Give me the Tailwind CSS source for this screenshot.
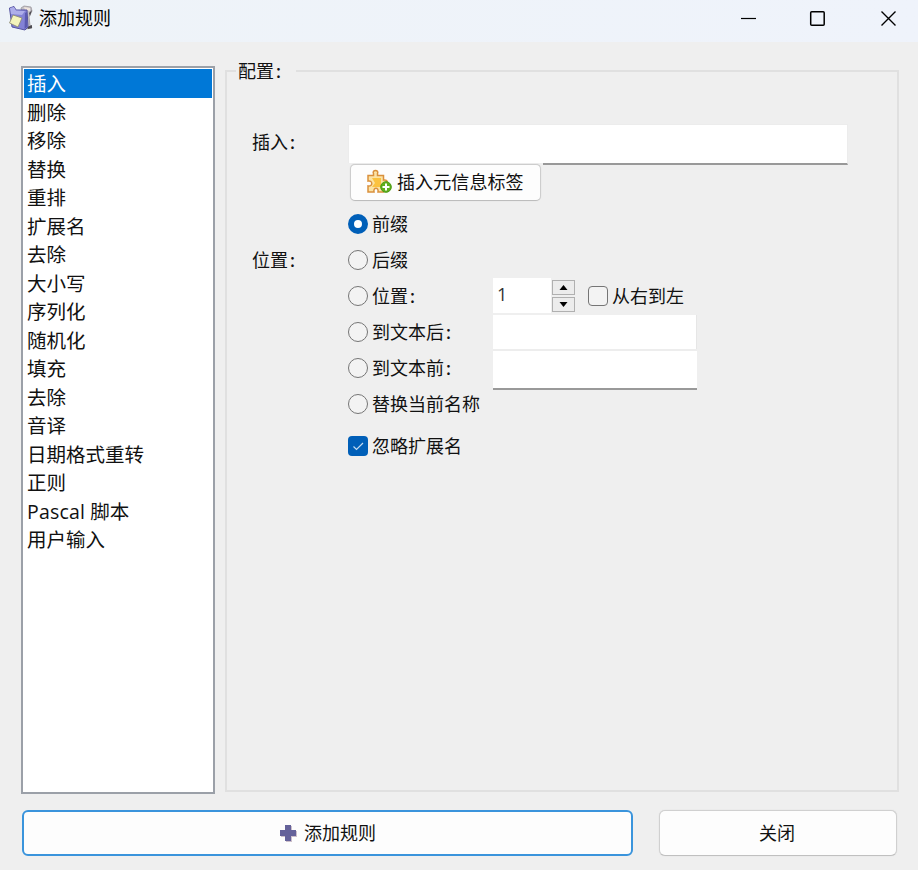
<!DOCTYPE html>
<html lang="zh-CN">
<head>
<meta charset="utf-8">
<title>添加规则</title>
<script src="https://cdn.jsdelivr.net/npm/@tailwindcss/browser@4"></script>
</head>
<body class="w-[918px] h-[870px] overflow-hidden bg-[#efefef] flex flex-col font-['Open_Sans','Noto_Sans_CJK_SC',sans-serif] text-[18px] leading-[36px] text-[#111]">
<header class="h-[42px] shrink-0 flex items-center bg-linear-to-r from-[#eef3f8] to-[#eff3fb] pl-[8px] pb-[6px]">
  <svg class="w-[26px] h-[26px] shrink-0" viewBox="0 0 26 26">
    <path d="M13 3L16 1L23 2L24 6L21 12L22 20L24 23L18 24Z" fill="#c4c1c6" stroke="#9a979c" stroke-width=".8"/>
    <path d="M16 2L22 3L22 6L17 5Z" fill="#efe4dc"/>
    <path d="M21 8L24 5L22 11ZM19 22L24 20V23L20 24Z" fill="#4c4a50"/>
    <path d="M1.500 3L6 1.500L8 5L19 5L20 22L17 25L4 22Z" fill="#8382d6" stroke="#5553a0" stroke-width="1"/>
    <path d="M2 3L6 2L8 5.500L17 6L14 10L3 9Z" fill="#aeaeea"/>
    <path d="M17 8L19 7V22L16.500 24Z" fill="#5b5ab0"/>
    <path d="M5 10L14 13L10 22L1.500 18Z" fill="#f4f4bc" stroke="#8a8970" stroke-width=".8"/>
  </svg>
  <h1 class="ml-[5px] text-black">添加规则</h1>
  <div class="ml-auto flex">
    <svg class="w-[70px] h-[36px]" viewBox="0 0 70 36"><path d="M13 18.500H28" stroke="#000" stroke-width="1.200"/></svg>
    <svg class="w-[70px] h-[36px]" viewBox="0 0 70 36"><rect x="12.700" y="11.700" width="13.500" height="13.500" rx="1" fill="none" stroke="#000" stroke-width="1.500"/></svg>
    <svg class="w-[50px] h-[36px]" viewBox="0 0 50 36"><path d="M13.500 11.500l14 14M27.500 11.500l-14 14" stroke="#000" stroke-width="1.400"/></svg>
  </div>
</header>
<main class="flex h-[752px] shrink-0 pl-[21px] pt-[24px]">
  <ul class="w-[193.5px] h-[728px] shrink-0 border-2 border-[#9ba0a8] bg-white pt-px pl-px pr-px text-[19.5px] leading-[30px] whitespace-nowrap">
    <li class="h-[28.5px] bg-[#0078d7] text-white pl-[3px]">插入</li>
    <li class="h-[28.5px] pl-[3px]">删除</li>
    <li class="h-[28.5px] pl-[3px]">移除</li>
    <li class="h-[28.5px] pl-[3px]">替换</li>
    <li class="h-[28.5px] pl-[3px]">重排</li>
    <li class="h-[28.5px] pl-[3px]">扩展名</li>
    <li class="h-[28.5px] pl-[3px]">去除</li>
    <li class="h-[28.5px] pl-[3px]">大小写</li>
    <li class="h-[28.5px] pl-[3px]">序列化</li>
    <li class="h-[28.5px] pl-[3px]">随机化</li>
    <li class="h-[28.5px] pl-[3px]">填充</li>
    <li class="h-[28.5px] pl-[3px]">去除</li>
    <li class="h-[28.5px] pl-[3px]">音译</li>
    <li class="h-[28.5px] pl-[3px]">日期格式重转</li>
    <li class="h-[28.5px] pl-[3px]">正则</li>
    <li class="h-[28.5px] pl-[3px]"><span class="tracking-[0.2px]">Pascal</span> 脚本</li>
    <li class="h-[28.5px] pl-[3px]">用户输入</li>
  </ul>
  <fieldset class="ml-[10.5px] mt-[-13px] w-[674px] h-[739px] border-2 border-[#e0e0e0] min-w-0">
    <legend class="ml-[9px] pl-[2px] pr-[12px] h-[36px] whitespace-nowrap">配置<span class="ml-[2px] mr-[3px] font-semibold">:</span></legend>
    <div class="flex pl-[25px] pt-[35px] whitespace-nowrap">
      <div class="w-[96px] shrink-0">
        <div class="h-[36px]">插入<span class="ml-[2px] font-semibold">:</span></div>
        <div class="mt-[82px] h-[36px]">位置<span class="ml-[2px] font-semibold">:</span></div>
      </div>
      <div>
        <div class="w-[500px] h-[41px] bg-white border border-[#ececec] border-b-2 border-b-[#999]"></div>
        <div class="mt-[-2px] w-[195px] h-[39px] bg-[#efefef] pl-[2px] pt-[1px]">
          <button class="w-[191px] h-[37px] rounded-[5px] bg-[#fdfdfd] border-[1.5px] border-[#cdcdcd] border-b-[#bdbdbd] shadow-[0_0_1px_#ccc] flex items-center pl-[15px]">
            <svg class="w-[26px] h-[26px] mt-[-1px]" viewBox="0 0 26 26">
              <path d="M2 6.500H7.500V4.500C5.500 0.500 13.500 0.500 11.500 4.500V6.500H17.500V11C22.500 10 22.500 16 17.500 15.500V23H12C13 18 7 18 8 23H2V17C7 18 7 11 2 12Z" fill="#fce3a4" stroke="#d9903c" stroke-width="1.500"/>
              <path d="M6 9H15V18H6L9 14Z" fill="#fbc23f"/>
              <circle cx="20" cy="18" r="5.300" fill="#5fae1c" stroke="#4a9a14"/>
              <path d="M16.500 18h7M20 14.500v7" stroke="#fff" stroke-width="2"/>
            </svg>
            <span class="ml-[5px] mt-[-1px] tracking-[0.1px]">插入元信息标签</span>
          </button>
        </div>
        <div class="flex mt-[4px]">
          <div class="w-[145px] shrink-0">
            <label class="flex items-center h-[36px]"><span class="w-[20px] h-[20px] mr-[4px] rounded-full bg-white border-[6px] border-[#005fb8]"></span>前缀</label>
            <label class="flex items-center h-[36px]"><span class="w-[20px] h-[20px] mr-[4px] rounded-full bg-[#f3f3f3] border-[1.5px] border-[#757575]"></span>后缀</label>
            <label class="flex items-center h-[36px]"><span class="w-[20px] h-[20px] mr-[4px] rounded-full bg-[#f3f3f3] border-[1.5px] border-[#757575]"></span>位置<span class="ml-[2px] font-semibold">:</span></label>
            <label class="flex items-center h-[36px]"><span class="w-[20px] h-[20px] mr-[4px] rounded-full bg-[#f3f3f3] border-[1.5px] border-[#757575]"></span>到文本后<span class="ml-[2px] font-semibold">:</span></label>
            <label class="flex items-center h-[36px]"><span class="w-[20px] h-[20px] mr-[4px] rounded-full bg-[#f3f3f3] border-[1.5px] border-[#757575]"></span>到文本前<span class="ml-[2px] font-semibold">:</span></label>
            <label class="flex items-center h-[36px]"><span class="w-[20px] h-[20px] mr-[4px] rounded-full bg-[#f3f3f3] border-[1.5px] border-[#757575]"></span>替换当前名称</label>
            <label class="flex items-center h-[36px] mt-[6px]"><span class="w-[20px] h-[20px] mr-[4px] rounded-[4px] bg-[#005fb8]"><svg class="w-[20px] h-[20px]" viewBox="0 0 20 20"><path d="M5.500 10.500l3 3L15 7" fill="none" stroke="#c4dcf0" stroke-width="1.200"/></svg></span>忽略扩展名</label>
          </div>
          <div class="pt-[72px]">
            <div class="flex h-[37px]">
              <div class="w-[58px] h-[35px] bg-white pl-[4px] leading-[33px] text-[#333]">1</div>
              <div class="ml-[1px] mt-[2px] flex flex-col gap-[1.5px]">
                <div class="w-[23px] h-[15px] border border-[#b0b0b0] bg-[#ececec] flex items-center justify-center"><svg class="w-[9px] h-[5px]" viewBox="0 0 9 5"><path d="M0.500 5L4.500 0L8.500 5Z"/></svg></div>
                <div class="w-[23px] h-[15px] border border-[#b0b0b0] bg-[#ececec] flex items-center justify-center"><svg class="w-[9px] h-[5px]" viewBox="0 0 9 5"><path d="M0.500 0L4.500 5L8.500 0Z"/></svg></div>
              </div>
              <label class="flex items-center h-[36px] ml-[13px]"><span class="w-[20px] h-[20px] mr-[4px] rounded-[4px] bg-[#f3f3f3] border-[1.5px] border-[#757575]"></span>从右到左</label>
            </div>
            <div class="w-[204px] h-[34px] bg-white border-r border-[#e6e6e6]"></div>
            <div class="w-[204px] h-[41px] bg-white border-t-2 border-t-[#ededed] border-b-2 border-b-[#999]"></div>
          </div>
        </div>
      </div>
    </div>
  </fieldset>
</main>
<footer class="flex pl-[22px] pt-[16px] leading-[42px]">
  <button class="w-[611px] h-[46px] rounded-[6px] border-2 border-[#3a94dc] bg-[#fdfdfd] flex items-center justify-center gap-[7px]">
    <svg class="w-[18px] h-[18px]" viewBox="0 0 18 18"><path d="M7 2h6v5h5v6h-5v5H7v-5H2V7h5Z" fill="#cdbfca"/><path d="M6 1h6v5h5v6h-5v5H6v-5H1V6h5Z" fill="#65629a"/></svg>
    <span>添加规则</span>
  </button>
  <button class="ml-[26px] w-[238px] h-[46px] rounded-[6px] border-[1.5px] border-[#d0d0d0] border-b-[#c0c0c0] shadow-[0_0_1px_#ccc] bg-[#fdfdfd] pr-[2px]">关闭</button>
</footer>
</body>
</html>
